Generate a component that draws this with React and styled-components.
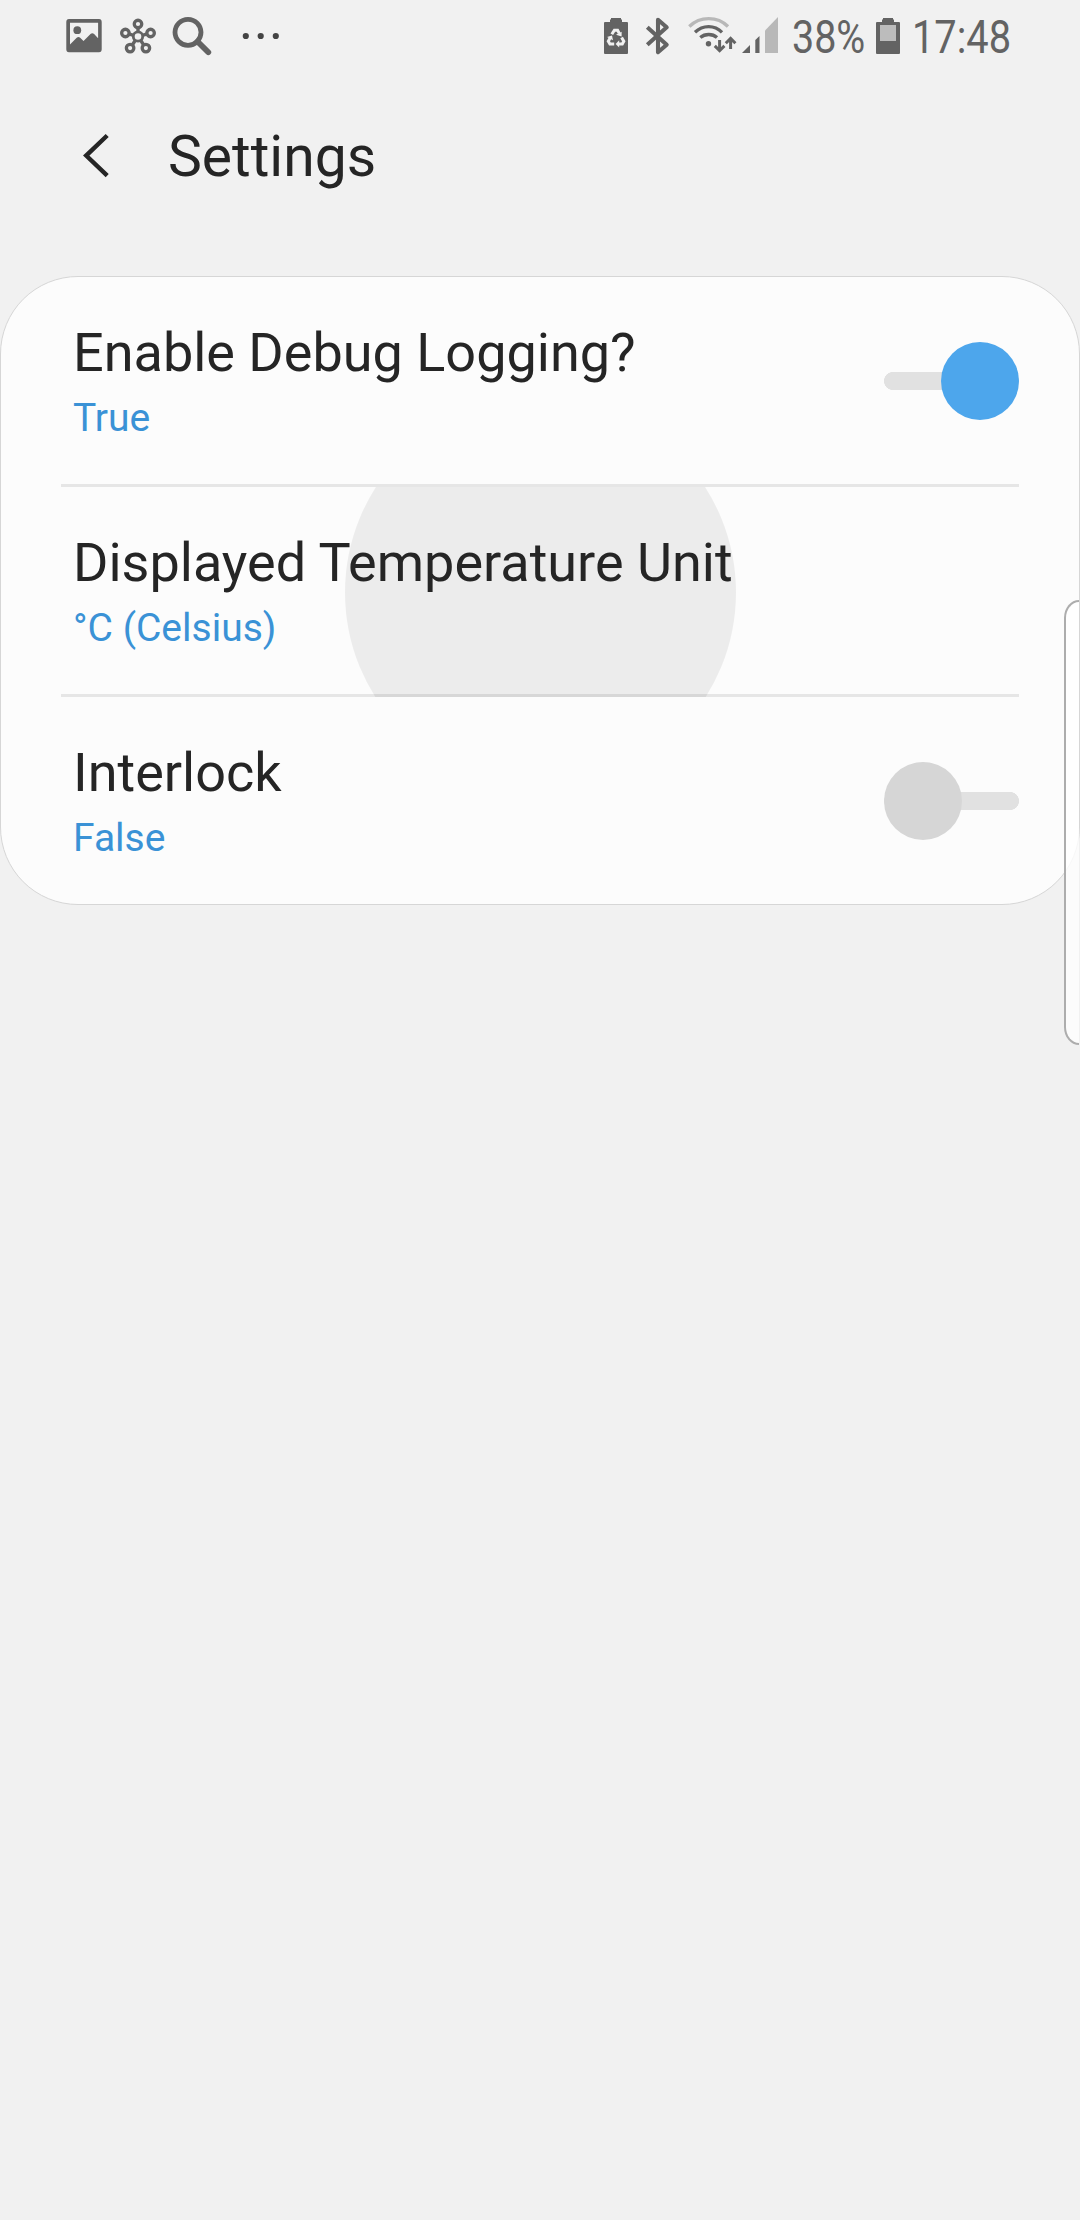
import React, { useState } from "react";
import styled, { createGlobalStyle } from "styled-components";

const GlobalStyle = createGlobalStyle`
  * { box-sizing: border-box; }
  html, body { margin: 0; background: #f1f1f1; }
  body { font-family: Roboto, "Liberation Sans", sans-serif; color: #252525; overflow: hidden; }
`;

const Screen = styled.main`
  position: relative;
  display: flex;
  flex-direction: column;
  width: 1080px;
  height: 2220px;
  overflow: hidden;
  background: #f1f1f1;
`;

const StatusBar = styled.header`
  display: flex;
  justify-content: space-between;
  height: 72px;
  padding: 0 60px 0 64px;
`;

const StatusGroup = styled.div`
  display: flex;
  color: #636363;
`;

const StatusIcon = styled.svg`
  display: block;
  flex: none;
  height: 72px;
  width: ${(p) => p.$width}px;
  overflow: visible;
`;

const StatusText = styled.span`
  width: ${(p) => p.$width}px;
  padding-left: 2px;
  font-size: 46px;
  line-height: 74px;
  white-space: nowrap;

  > span {
    display: inline-block;
    transform: scaleX(${(p) => p.$stretch});
    transform-origin: left;
  }
`;

const AppBar = styled.div`
  display: flex;
  align-items: center;
  height: 168px;
  padding: 0 0 0 72px;
`;

const BackButton = styled.button`
  width: 96px;
  height: 96px;
  padding: 0;
  border: 0;
  background: none;

  svg { display: block; }
`;

const Title = styled.h1`
  margin: 1px 0 0;
  font-size: 57px;
  line-height: 69px;
  font-weight: 400;
`;

const Card = styled.section`
  margin-top: 36px;
  height: 629px;
  border: 1px solid #d6d6d6;
  border-radius: 78px;
  background: #fcfcfc;
  overflow: hidden;
`;

const Row = styled.div`
  position: relative;
  display: flex;
  height: 210px;
  padding: 0 60px;
  overflow: hidden;
`;

const RowBody = styled.div`
  position: relative;
  flex: 1;
  display: flex;
  justify-content: space-between;
  padding: 44px 0 0 12px;
  border-bottom: ${(p) => (p.$divided ? "3px solid #e6e6e6" : "0")};
`;

const Labels = styled.div`
  position: relative;
  z-index: 1;
`;

const RowTitle = styled.div`
  font-size: 54px;
  line-height: 64px;
`;

const RowValue = styled.div`
  margin-top: 9px;
  font-size: 39px;
  line-height: 48px;
  color: #3a92d6;
`;

const Ripple = styled.span`
  position: absolute;
  left: 344px;
  top: -90.5px;
  width: 391px;
  height: 391px;
  border-radius: 50%;
  background: rgba(0, 0, 0, 0.061);
`;

const Toggle = styled.button`
  display: flex;
  align-items: center;
  justify-content: ${(p) => (p.$on ? "flex-end" : "flex-start")};
  width: 135px;
  height: 78px;
  margin-top: 21px;
  padding: 0;
  border: 0;
  background: linear-gradient(#e1e1e1, #e1e1e1) center / 117px 18px no-repeat,
    radial-gradient(circle at 9px 39px, #e1e1e1 8.7px, transparent 9.3px),
    radial-gradient(circle at 126px 39px, #e1e1e1 8.7px, transparent 9.3px);
`;

const Thumb = styled.span`
  width: 78px;
  height: 78px;
  border-radius: 50%;
  background: ${(p) => (p.$on ? "#4da6ec" : "#d6d6d6")};
`;

const EdgeHandle = styled.div`
  position: absolute;
  left: 1064px;
  top: 600px;
  z-index: 2;
  width: 15px;
  height: 445px;
  border: 2px solid #adadad;
  border-right: 0;
  border-radius: 15px 0 0 15px / 18px 0 0 18px;
  background: rgba(255, 255, 255, 0.8);
  background-clip: padding-box;
`;

function Preference({ title, value, divided, pressed, toggle }) {
  const [on, setOn] = useState(toggle === "on");
  return (
    <Row>
      <RowBody $divided={divided}>
        <Labels>
          <RowTitle>{title}</RowTitle>
          <RowValue>{value}</RowValue>
        </Labels>
        {toggle && (
          <Toggle $on={on} onClick={() => setOn(!on)} role="switch" aria-checked={on}>
            <Thumb $on={on} />
          </Toggle>
        )}
      </RowBody>
      {pressed && <Ripple />}
    </Row>
  );
}

const PictureIcon = () => (
  <StatusIcon $width={54} viewBox="64 0 54 72" fill="currentColor">
    <path
      fillRule="evenodd"
      d="M69 19H99Q101.700 19 101.700 22V49.300Q101.700 52.300 99 52.300H69Q66.300 52.300 66.300 49.300V22Q66.300 19 69 19ZM70 22.700V44.500L76.700 37.800Q78.500 36.200 80.200 37.800L83.500 41L90.500 34Q92.300 32.300 94.100 34L98.100 38.200V22.700Z"
    />
    <circle cx="77.300" cy="30.200" r="3.900" />
  </StatusIcon>
);

const hubNodes = [
  [138, 24],
  [125.400, 33],
  [150.600, 33],
  [130.100, 48.100],
  [145.900, 48.100],
];

const HubIcon = () => (
  <StatusIcon $width={52} viewBox="118 0 52 72" fill="none" stroke="currentColor">
    {hubNodes.map(([x, y]) => {
      const dx = x - 138;
      const dy = y - 36.5;
      const n = Math.hypot(dx, dy);
      return (
        <g key={x}>
          <path
            strokeWidth="3.400"
            d={`M${138 + (dx / n) * 4.6} ${36.5 + (dy / n) * 4.6}L${x - (dx / n) * 3.5} ${y - (dy / n) * 3.5}`}
          />
          <circle cx={x} cy={y} r="3.750" strokeWidth="3.300" />
        </g>
      );
    })}
    <circle cx="138" cy="36.500" r="4.700" strokeWidth="2.800" />
  </StatusIcon>
);

const SearchIcon = () => (
  <StatusIcon $width={66} viewBox="170 0 66 72" fill="none" stroke="currentColor">
    <circle cx="188" cy="32.300" r="13" strokeWidth="4.800" />
    <path d="M197.500 41.500L208.300 52.200" strokeWidth="5.800" strokeLinecap="round" />
  </StatusIcon>
);

const MoreIcon = () => (
  <StatusIcon $width={44} viewBox="236 0 44 72" fill="#444">
    <circle cx="245.800" cy="36" r="3.100" />
    <circle cx="260.700" cy="36" r="3.100" />
    <circle cx="275.800" cy="36" r="3.100" />
  </StatusIcon>
);

const RecycleBatteryIcon = () => (
  <StatusIcon $width={38} viewBox="600 0 38 72">
    <path
      fill="currentColor"
      d="M611 18H621V19.500H622V22H627Q628 22 628 23V53Q628 54 627 54H605Q604 54 604 53V23Q604 22 605 22H610V19.500H611Z"
    />
    <g fill="none" stroke="#f1f1f1" strokeWidth="3">
      <path d="M611.800 34.300L614.400 30.200H617.600L619.300 33.400" />
      <path d="M621.600 37.400L623.800 41.200L622.300 43.900H618.500" />
      <path d="M614.200 43.900H609.900L608.300 41.200L610.400 37.600" />
    </g>
    <g fill="#f1f1f1">
      <path d="M616 34.700L621.600 31.700L621.600 36.400Z" />
      <path d="M619.200 40.300V47.500L615.600 43.900Z" />
      <path d="M607 37L612 35.600L613 40.300Z" />
    </g>
  </StatusIcon>
);

const BluetoothIcon = () => (
  <StatusIcon $width={42} viewBox="638 0 42 72" fill="none" stroke="currentColor">
    <path
      d="M647.300 27.200L666.700 44.700L658 52.200V19.800L666.700 27.300L647.300 44.800"
      strokeWidth="4.100"
      strokeLinejoin="round"
    />
  </StatusIcon>
);

const WifiIcon = () => (
  <StatusIcon $width={60} viewBox="680 0 60 72" fill="none" stroke="currentColor" strokeWidth="3.300">
    <path stroke="#b8b8b8" d="M689.300 26.500C700 16 717.500 16 728 26.500" />
    <path d="M695 32.300C702.800 24.700 714.500 24.700 722 32.300" />
    <path d="M700.300 37.500C705 33.500 712.500 33.500 717 37.500" />
    <circle cx="708.500" cy="43.700" r="2.700" fill="currentColor" stroke="none" />
    <path d="M719.600 40V51M714.800 45.900L719.600 50.700L724.400 45.900" strokeWidth="3" />
    <path d="M730.600 49V38.500M725.800 43.200L730.600 38.400L735.400 43.200" strokeWidth="3" />
  </StatusIcon>
);

const SignalIcon = () => (
  <StatusIcon $width={50} viewBox="740 0 50 72" fill="currentColor">
    <path d="M742 53L750 45V53Z" />
    <path d="M755.300 53V40L759.500 36V53Z" />
    <path fill="#b8b8b8" d="M765 53V30.500L778 17V53Z" />
  </StatusIcon>
);

const BatteryIcon = () => (
  <StatusIcon $width={38} viewBox="872 0 38 72">
    <path
      fill="currentColor"
      d="M883 18H893V19.500H894V22H899Q900 22 900 23V53Q900 54 899 54H877Q876 54 876 53V23Q876 22 877 22H882V19.500H883Z"
    />
    <path fill="#bcbcbc" d="M880 25H896V41H880Z" />
  </StatusIcon>
);

export default function App() {
  return (
    <>
      <GlobalStyle />
      <Screen>
        <StatusBar>
          <StatusGroup>
            <PictureIcon />
            <HubIcon />
            <SearchIcon />
            <MoreIcon />
          </StatusGroup>
          <StatusGroup>
            <RecycleBatteryIcon />
            <BluetoothIcon />
            <WifiIcon />
            <SignalIcon />
            <StatusText $width={82} $stretch={0.858}>
              <span>38%</span>
            </StatusText>
            <BatteryIcon />
            <StatusText $width={110} $stretch={0.865}>
              <span>17:48</span>
            </StatusText>
          </StatusGroup>
        </StatusBar>
        <AppBar>
          <BackButton aria-label="Back">
            <svg width="96" height="96" viewBox="72 108 96 96" fill="none">
              <path d="M107.200 135.500L86.200 155.600L107.200 175.700" stroke="#252525" strokeWidth="4.400" />
            </svg>
          </BackButton>
          <Title>Settings</Title>
        </AppBar>
        <Card>
          <Preference title="Enable Debug Logging?" value="True" divided toggle="on" />
          <Preference title="Displayed Temperature Unit" value="°C (Celsius)" divided pressed />
          <Preference title="Interlock" value="False" toggle="off" />
        </Card>
        <EdgeHandle />
      </Screen>
    </>
  );
}
